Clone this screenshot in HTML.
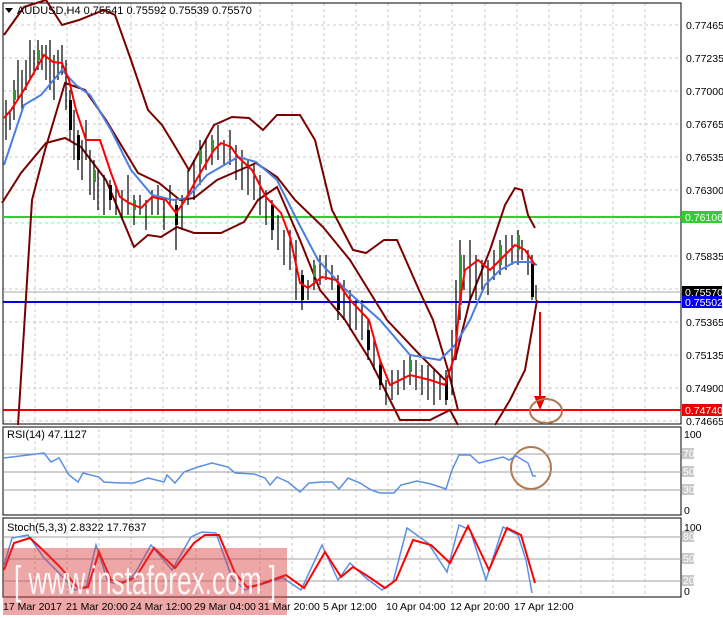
<!DOCTYPE html>
<html><head><meta charset="utf-8"><style>
html,body{margin:0;padding:0;background:#fff;width:723px;height:618px;overflow:hidden}
svg{display:block;font-family:"Liberation Sans",sans-serif}
</style></head><body>
<svg width="723" height="618" viewBox="0 0 723 618" xmlns="http://www.w3.org/2000/svg">
<rect width="723" height="618" fill="#fff"/>
<g stroke="#c8c8c8" stroke-dasharray="3,3" stroke-width="1">
<line x1="3" y1="25" x2="681" y2="25"/><line x1="3" y1="58" x2="681" y2="58"/><line x1="3" y1="91" x2="681" y2="91"/><line x1="3" y1="124" x2="681" y2="124"/><line x1="3" y1="157" x2="681" y2="157"/><line x1="3" y1="190" x2="681" y2="190"/><line x1="3" y1="223" x2="681" y2="223"/><line x1="3" y1="256" x2="681" y2="256"/><line x1="3" y1="289" x2="681" y2="289"/><line x1="3" y1="322" x2="681" y2="322"/><line x1="3" y1="355" x2="681" y2="355"/><line x1="3" y1="388" x2="681" y2="388"/><line x1="3" y1="421" x2="681" y2="421"/>
<path d="M35 3V597M67 3V597M99 3V597M131 3V597M163 3V597M196 3V597M228 3V597M260 3V597M292 3V597M324 3V597M356 3V597M388 3V597M420 3V597M452 3V597M485 3V597M517 3V597M549 3V597M581 3V597M613 3V597M645 3V597"/>
</g>
<rect x="0" y="424" width="682" height="3" fill="#fff"/>
<rect x="0" y="515" width="682" height="3" fill="#fff"/>
<rect x="3" y="3" width="678" height="421" fill="none" stroke="#000"/>
<rect x="3" y="427" width="678" height="88" fill="none" stroke="#000"/>
<rect x="3" y="518" width="678" height="79" fill="none" stroke="#000"/>
<line x1="3" y1="292" x2="681" y2="292" stroke="#aaa"/>
<line x1="3" y1="217" x2="681" y2="217" stroke="#33cc33" stroke-width="2"/>
<line x1="3" y1="302" x2="681" y2="302" stroke="#0000ee" stroke-width="2"/>
<line x1="3" y1="410" x2="681" y2="410" stroke="#ee0000" stroke-width="2"/>
<g fill="none" stroke="#7a0000" stroke-width="2">
<polyline points="4,35 24,7 46,0 62,25 79,20 104,10 115,15 131,60 148,110 162,125 176,148 189,170 214,125 232,117 249,118 263,130 277,115 300,115 315,140 332,210 353,250 366,253 384,240 397,240 419,290 433,320 448,370 458,410"/>
<polyline points="455,360 470,300 490,250 505,205 515,188 522,190 528,215 535,228"/>
<polyline points="2,203 21,173 46,143 65,138 81,147 106,180 134,247 148,235 161,237 177,227 194,233 221,233 244,222 258,200 277,187 300,240 320,290 345,320 370,360 390,400 400,420 430,420 450,410 458,425"/>
<polyline points="18,425 24,330 32,200 45,150 65,83 85,90 106,120 138,173 159,183 180,200 194,198 217,180 256,163 277,177 295,200 323,227 350,260 387,320 420,355 445,380"/>
<polyline points="495,425 510,400 525,370 532,330 537,300"/>
</g>
<g stroke="#000" stroke-width="1.2" fill="none">
<path d="M6 100V140M10 110V130M14 80V120M18 60V100M22 70V110M26 60V90M30 40V80M34 50V75M38 40V70M42 45V70M46 45V80M50 40V90M54 55V100M58 50V80M62 45V75M66 60V110M70 90V140M74 110V160M78 130V170M82 140V180M86 120V160M90 150V195M94 160V200M98 170V210M104 175V215M110 180V210M116 185V215M122 190V220M128 175V215M134 195V225M140 195V215M146 200V230M152 190V215M158 185V215M164 200V230M170 185V205M176 200V250M182 195V230M188 170V205M194 160V200M200 140V185M206 140V170M212 135V165M218 125V160M224 140V165M230 130V165M236 145V180M242 150V190M248 160V195M254 165V200M260 175V215M266 190V225M272 200V240M278 215V250M284 230V265M290 230V270M296 240V300M302 270V310M308 280V300M314 260V290M320 255V285M326 255V280M332 265V290M338 275V320M344 280V320M350 290V330M356 300V330M362 300V340M368 320V360M374 340V370M380 360V390M386 380V405M392 370V400M398 370V395M404 360V390M410 355V385M416 360V390M422 365V395M428 365V400M434 370V405M440 375V400M446 370V405M452 330V395M456 280V360M460 240V320M464 255V290M470 240V300M476 255V300M482 260V290M488 260V295M494 250V280M500 240V275M506 235V270M512 235V265M518 230V265M522 240V260M528 250V275M532 255V300M536 285V300"/>
</g>
<g fill="#000"><rect x="69" y="100" width="3" height="30"/><rect x="77" y="135" width="3" height="25"/><rect x="109" y="185" width="3" height="15"/><rect x="175" y="205" width="3" height="20"/><rect x="271" y="205" width="3" height="25"/><rect x="301" y="275" width="3" height="25"/><rect x="337" y="285" width="3" height="25"/><rect x="367" y="330" width="3" height="20"/><rect x="379" y="365" width="3" height="20"/><rect x="445" y="380" width="3" height="20"/><rect x="531" y="262" width="3" height="35"/></g>
<g fill="#2e9a2e"><rect x="13" y="90" width="3" height="10"/><rect x="37" y="50" width="3" height="10"/><rect x="93" y="170" width="3" height="12"/><rect x="133" y="200" width="3" height="10"/><rect x="199" y="150" width="3" height="14"/><rect x="211" y="140" width="3" height="12"/><rect x="313" y="265" width="3" height="12"/><rect x="409" y="360" width="3" height="12"/><rect x="459" y="255" width="3" height="50"/><rect x="499" y="245" width="3" height="20"/><rect x="517" y="235" width="3" height="15"/></g>
<polyline fill="none" stroke="#4a7fe0" stroke-width="2" points="4,165 24,105 41,95 62,70 76,85 90,95 111,130 131,170 152,195 173,200 187,198 207,175 238,157 256,162 277,180 297,220 318,260 346,290 380,320 410,355 440,360 455,345 470,320 485,285 500,270 515,262 530,262 537,265"/>
<polyline fill="none" stroke="#ff0000" stroke-width="2" points="4,118 11,110 24,90 44,55 53,62 62,63 69,80 76,110 86,140 100,140 111,173 120,197 129,203 141,208 152,197 166,200 176,213 184,202 198,177 214,150 221,143 231,147 238,157 252,170 266,197 281,213 290,237 300,283 308,288 322,277 336,280 350,300 369,320 380,360 390,385 410,375 430,380 445,385 455,355 460,300 465,270 478,260 490,270 505,255 515,245 525,250 535,265"/>
<line x1="540" y1="312" x2="540" y2="400" stroke="#ee0000" stroke-width="2"/>
<polygon points="534,396 546,396 540,410" fill="#ee0000"/>
<ellipse cx="546" cy="411" rx="16" ry="12" fill="none" stroke="#b07850" stroke-width="2"/>
<ellipse cx="531" cy="468" rx="20" ry="21" fill="none" stroke="#b07850" stroke-width="2"/>
<g stroke="#a0a0a0"><line x1="3" y1="454" x2="681" y2="454"/><line x1="3" y1="472" x2="681" y2="472"/><line x1="3" y1="490" x2="681" y2="490"/>
<line x1="3" y1="537" x2="681" y2="537"/><line x1="3" y1="559" x2="681" y2="559"/><line x1="3" y1="581" x2="681" y2="581"/></g>
<polyline fill="none" stroke="#5b8fe6" stroke-width="1.5" points="4,458 28,455 44,453 51,462 59,458 69,475 78,482 83,473 99,477 104,482 120,483 134,483 148,478 164,482 167,475 175,483 184,472 198,467 212,463 228,467 235,473 254,474 265,478 270,485 277,477 288,482 300,492 309,483 323,482 332,482 339,489 348,478 360,483 371,490 380,493 394,493 401,485 417,481 431,484 446,489 452,470 459,455 470,455 479,463 491,460 503,457 509,460 516,456 528,463 533,476 536,476"/>
<polyline fill="none" stroke="#5b8fe6" stroke-width="1.5" points="4,565 12,538 28,535 44,558 58,572 75,590 86,588 96,545 108,582 120,584 134,575 151,545 172,570 191,537 202,532 216,533 232,578 245,590 256,586 283,578 301,590 322,545 338,580 350,563 366,578 382,590 393,582 407,528 428,543 447,572 459,525 470,530 486,580 503,527 518,535 526,560 532,593"/>
<polyline fill="none" stroke="#ff0000" stroke-width="2" points="4,570 14,543 30,538 46,553 60,567 78,588 88,587 99,552 111,580 122,583 136,577 154,548 175,568 194,543 205,535 219,535 235,573 247,587 258,585 286,575 304,588 325,552 341,577 353,567 369,577 385,588 396,580 413,540 431,545 450,563 468,526 489,570 507,528 521,535 535,583"/>
<rect x="3" y="548" width="284" height="67" fill="rgba(215,60,60,0.45)"/>
<text x="14" y="594" font-size="40" fill="rgba(255,255,255,0.9)" textLength="262" lengthAdjust="spacingAndGlyphs">[ www.instaforex.com ]</text>
<g font-size="11" fill="#000">
<path d="M5 8h8l-4 5z" fill="#000"/>
<text x="17" y="14">AUDUSD,H4  0.75541 0.75592 0.75539 0.75570</text>
<text x="7" y="438">RSI(14) 47.1127</text>
<text x="7" y="531">Stoch(5,3,3) 2.8322 17.7637</text>
</g>
<g font-size="10.5" fill="#000">
<text x="686" y="29">0.77465</text><text x="686" y="62">0.77235</text><text x="686" y="95">0.77000</text><text x="686" y="128">0.76765</text><text x="686" y="161">0.76535</text><text x="686" y="194">0.76300</text><text x="686" y="260">0.75835</text><text x="686" y="326">0.75365</text><text x="686" y="359">0.75135</text><text x="686" y="392">0.74900</text><text x="686" y="425">0.74665</text>
<text x="684" y="438">100</text><text x="684" y="514">0</text><text x="684" y="531">100</text><text x="684" y="595">0</text>
</g>
<g font-size="10.5" fill="#fff">
<rect x="682" y="448" width="12" height="11" fill="#c8c8c8"/><text x="683" y="457">70</text>
<rect x="682" y="466" width="12" height="11" fill="#c8c8c8"/><text x="683" y="475">50</text>
<rect x="682" y="484" width="12" height="11" fill="#c8c8c8"/><text x="683" y="493">30</text>
<rect x="682" y="531" width="12" height="11" fill="#c8c8c8"/><text x="683" y="540">80</text>
<rect x="682" y="553" width="12" height="11" fill="#c8c8c8"/><text x="683" y="562">50</text>
<rect x="682" y="575" width="12" height="11" fill="#c8c8c8"/><text x="683" y="584">20</text>
<rect x="682" y="211" width="40" height="12" fill="#33cc33"/><text x="685" y="221">0.76106</text>
<rect x="682" y="286" width="40" height="12" fill="#000"/><text x="685" y="296">0.75570</text>
<rect x="682" y="296" width="40" height="12" fill="#0000ee"/><text x="685" y="306">0.75502</text>
<rect x="682" y="404" width="40" height="12" fill="#ee0000"/><text x="685" y="414">0.74740</text>
</g>
<g font-size="10.5" fill="#000">
<text x="3" y="610">17 Mar 2017</text><text x="66" y="610">21 Mar 20:00</text><text x="130" y="610">24 Mar 12:00</text><text x="194" y="610">29 Mar 04:00</text><text x="258" y="610">31 Mar 20:00</text><text x="323" y="610">5 Apr 12:00</text><text x="386" y="610">10 Apr 04:00</text><text x="450" y="610">12 Apr 20:00</text><text x="514" y="610">17 Apr 12:00</text>
</g>
</svg>
</body></html>
